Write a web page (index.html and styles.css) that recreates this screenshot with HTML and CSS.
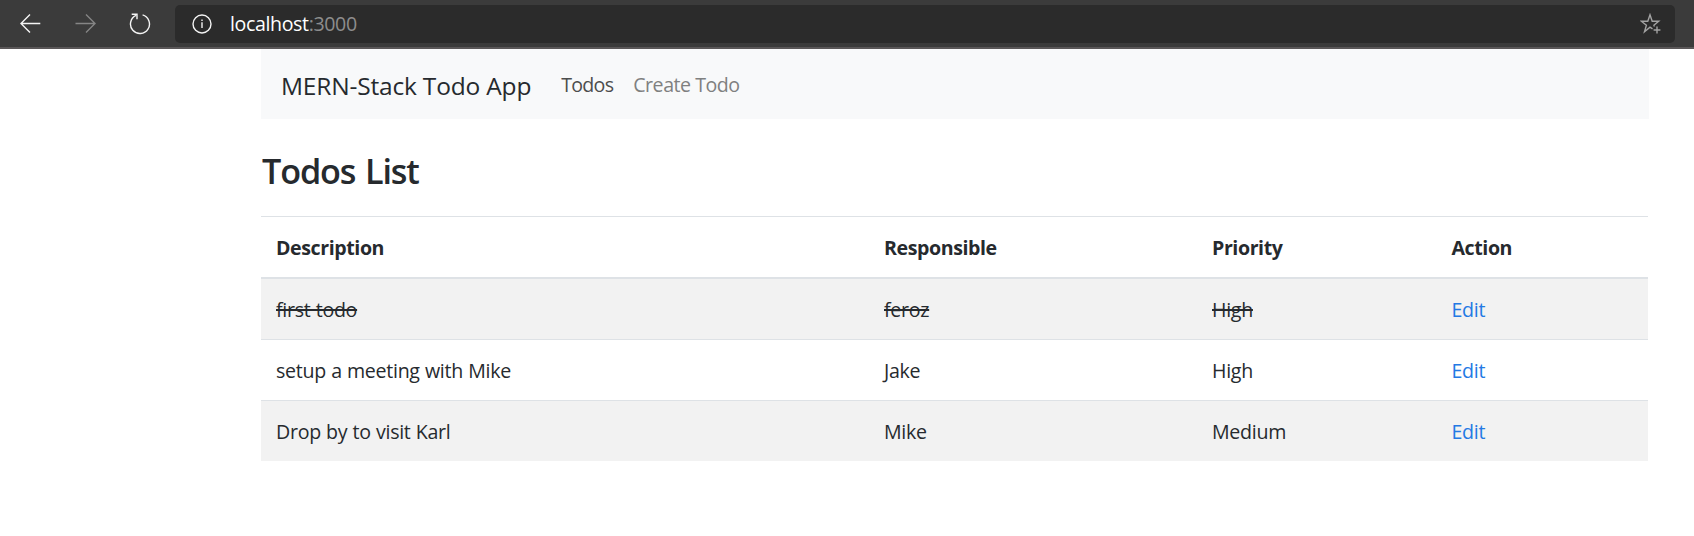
FILE: index.html
```html
<!DOCTYPE html>
<html lang="en">
<head>
<meta charset="utf-8">
<title>MERN-Stack Todo App</title>
<link rel="stylesheet" href="styles.css">
</head>
<body>
<header class="browser-bar">
  <svg class="icon" width="21" height="21" viewBox="0 0 21 21"><path d="M20.3 10.5H1.2M10 1.5L1 10.5l9 9"/></svg>
  <svg class="icon icon-disabled" width="21" height="21" viewBox="0 0 21 21"><path d="M.5 10.5H19.8M11 1.5l9 9-9 9"/></svg>
  <svg class="icon icon-reload" width="22" height="23" viewBox="0 0 22 23"><path d="M13.6 2.9A9.5 9.5 0 1 1 7 3.4M2.7 2.2H8V7.3"/></svg>
  <div class="address">
    <svg class="icon icon-info" width="20" height="20" viewBox="0 0 20 20"><circle cx="10" cy="10" r="9"/><path d="M10 8.2V14M10 5.4V7"/></svg>
    <span class="url"><span class="host">localhost</span><span class="port">:3000</span></span>
    <svg class="icon icon-star" width="21" height="21" viewBox="0 0 21 21"><path d="M12.5 15.8L10 14.2 4.5 18.8 6.4 12.2 1.3 8.2H7.8L10 1.8 12.2 8.2H18.7L13.9 12.2 14.4 13.6M17 13.6V20.4M13.6 17H20.4"/></svg>
  </div>
</header>
<main class="container">
  <nav class="navbar">
    <a class="brand">MERN-Stack Todo App</a>
    <a class="nav-link active">Todos</a>
    <a class="nav-link">Create Todo</a>
  </nav>
  <h3 class="title">Todos List</h3>
  <table class="table">
    <thead>
      <tr><th class="col-desc">Description</th><th class="col-resp">Responsible</th><th class="col-prio">Priority</th><th>Action</th></tr>
    </thead>
    <tbody>
      <tr><td><span class="completed">first todo</span></td><td><span class="completed">feroz</span></td><td><span class="completed">High</span></td><td><a class="edit">Edit</a></td></tr>
      <tr><td>setup a meeting with Mike</td><td>Jake</td><td>High</td><td><a class="edit">Edit</a></td></tr>
      <tr><td>Drop by to visit Karl</td><td>Mike</td><td>Medium</td><td><a class="edit">Edit</a></td></tr>
    </tbody>
  </table>
</main>
</body>
</html>
```
FILE: styles.css
```css
* { box-sizing: border-box; }
body { margin: 0; background: #fff; color: #262a2e; font: 19.6px/30px "Open Sans", "Noto Sans", sans-serif; }
.browser-bar { display: flex; align-items: center; height: 49px; padding: 0 19px 1px 20px; background: #3b3b3b; border-bottom: 2px solid #5a5758; }
.icon { flex: none; fill: none; stroke: #f4f4f4; stroke-width: 1.4; }
.icon-disabled { margin-left: 34px; stroke: #858585; }
.icon-reload { margin-left: 33px; }
.address { display: flex; align-items: center; flex: 1; height: 38px; margin-left: 24px; margin-top: 1px; padding: 0 14px 0 17px; border-radius: 5px; background: #2b2b2b; }
.url { margin-left: 18px; letter-spacing: -0.38px; }
.host { color: #fff; }
.port { color: #8d8d8d; }
.icon-star { margin-left: auto; stroke: #a3a3a3; }
.container { width: 1388px; margin-left: 261px; }
.navbar { display: flex; align-items: baseline; height: 70px; padding: 22px 20px 0; background: #f8f9fa; }
.brand { margin-right: 30px; font-size: 24.5px; letter-spacing: -0.18px; }
.nav-link { position: relative; top: -3px; margin-right: 20px; color: #7f8080; letter-spacing: -0.48px; }
.active { color: #4c4d4d; letter-spacing: -0.74px; }
.title { margin: 31px 0 0; padding-left: 1px; font-size: 34.2px; line-height: 42px; font-weight: 600; letter-spacing: -1.15px; word-spacing: 2px; }
.table { width: 1387px; margin-top: 24px; border-collapse: separate; border-spacing: 0; table-layout: fixed; letter-spacing: -0.28px; word-spacing: 0.4px; }
th, td { height: 61px; padding: 2px 15px 0; border-top: 1px solid #dee2e6; text-align: left; }
th { height: 63px; border-bottom: 2px solid #dee2e6; font-weight: 700; letter-spacing: -0.42px; }
tbody tr:first-child td { border-top: 0; height: 60px; }
tbody tr:nth-child(odd) { background: #f2f2f2; }
.col-desc { width: 608px; }
.col-resp { width: 328px; }
.col-prio { width: 239.5px; }
.completed { text-decoration: line-through; text-decoration-thickness: 2px; }
.edit { color: #2379e4; }
```
